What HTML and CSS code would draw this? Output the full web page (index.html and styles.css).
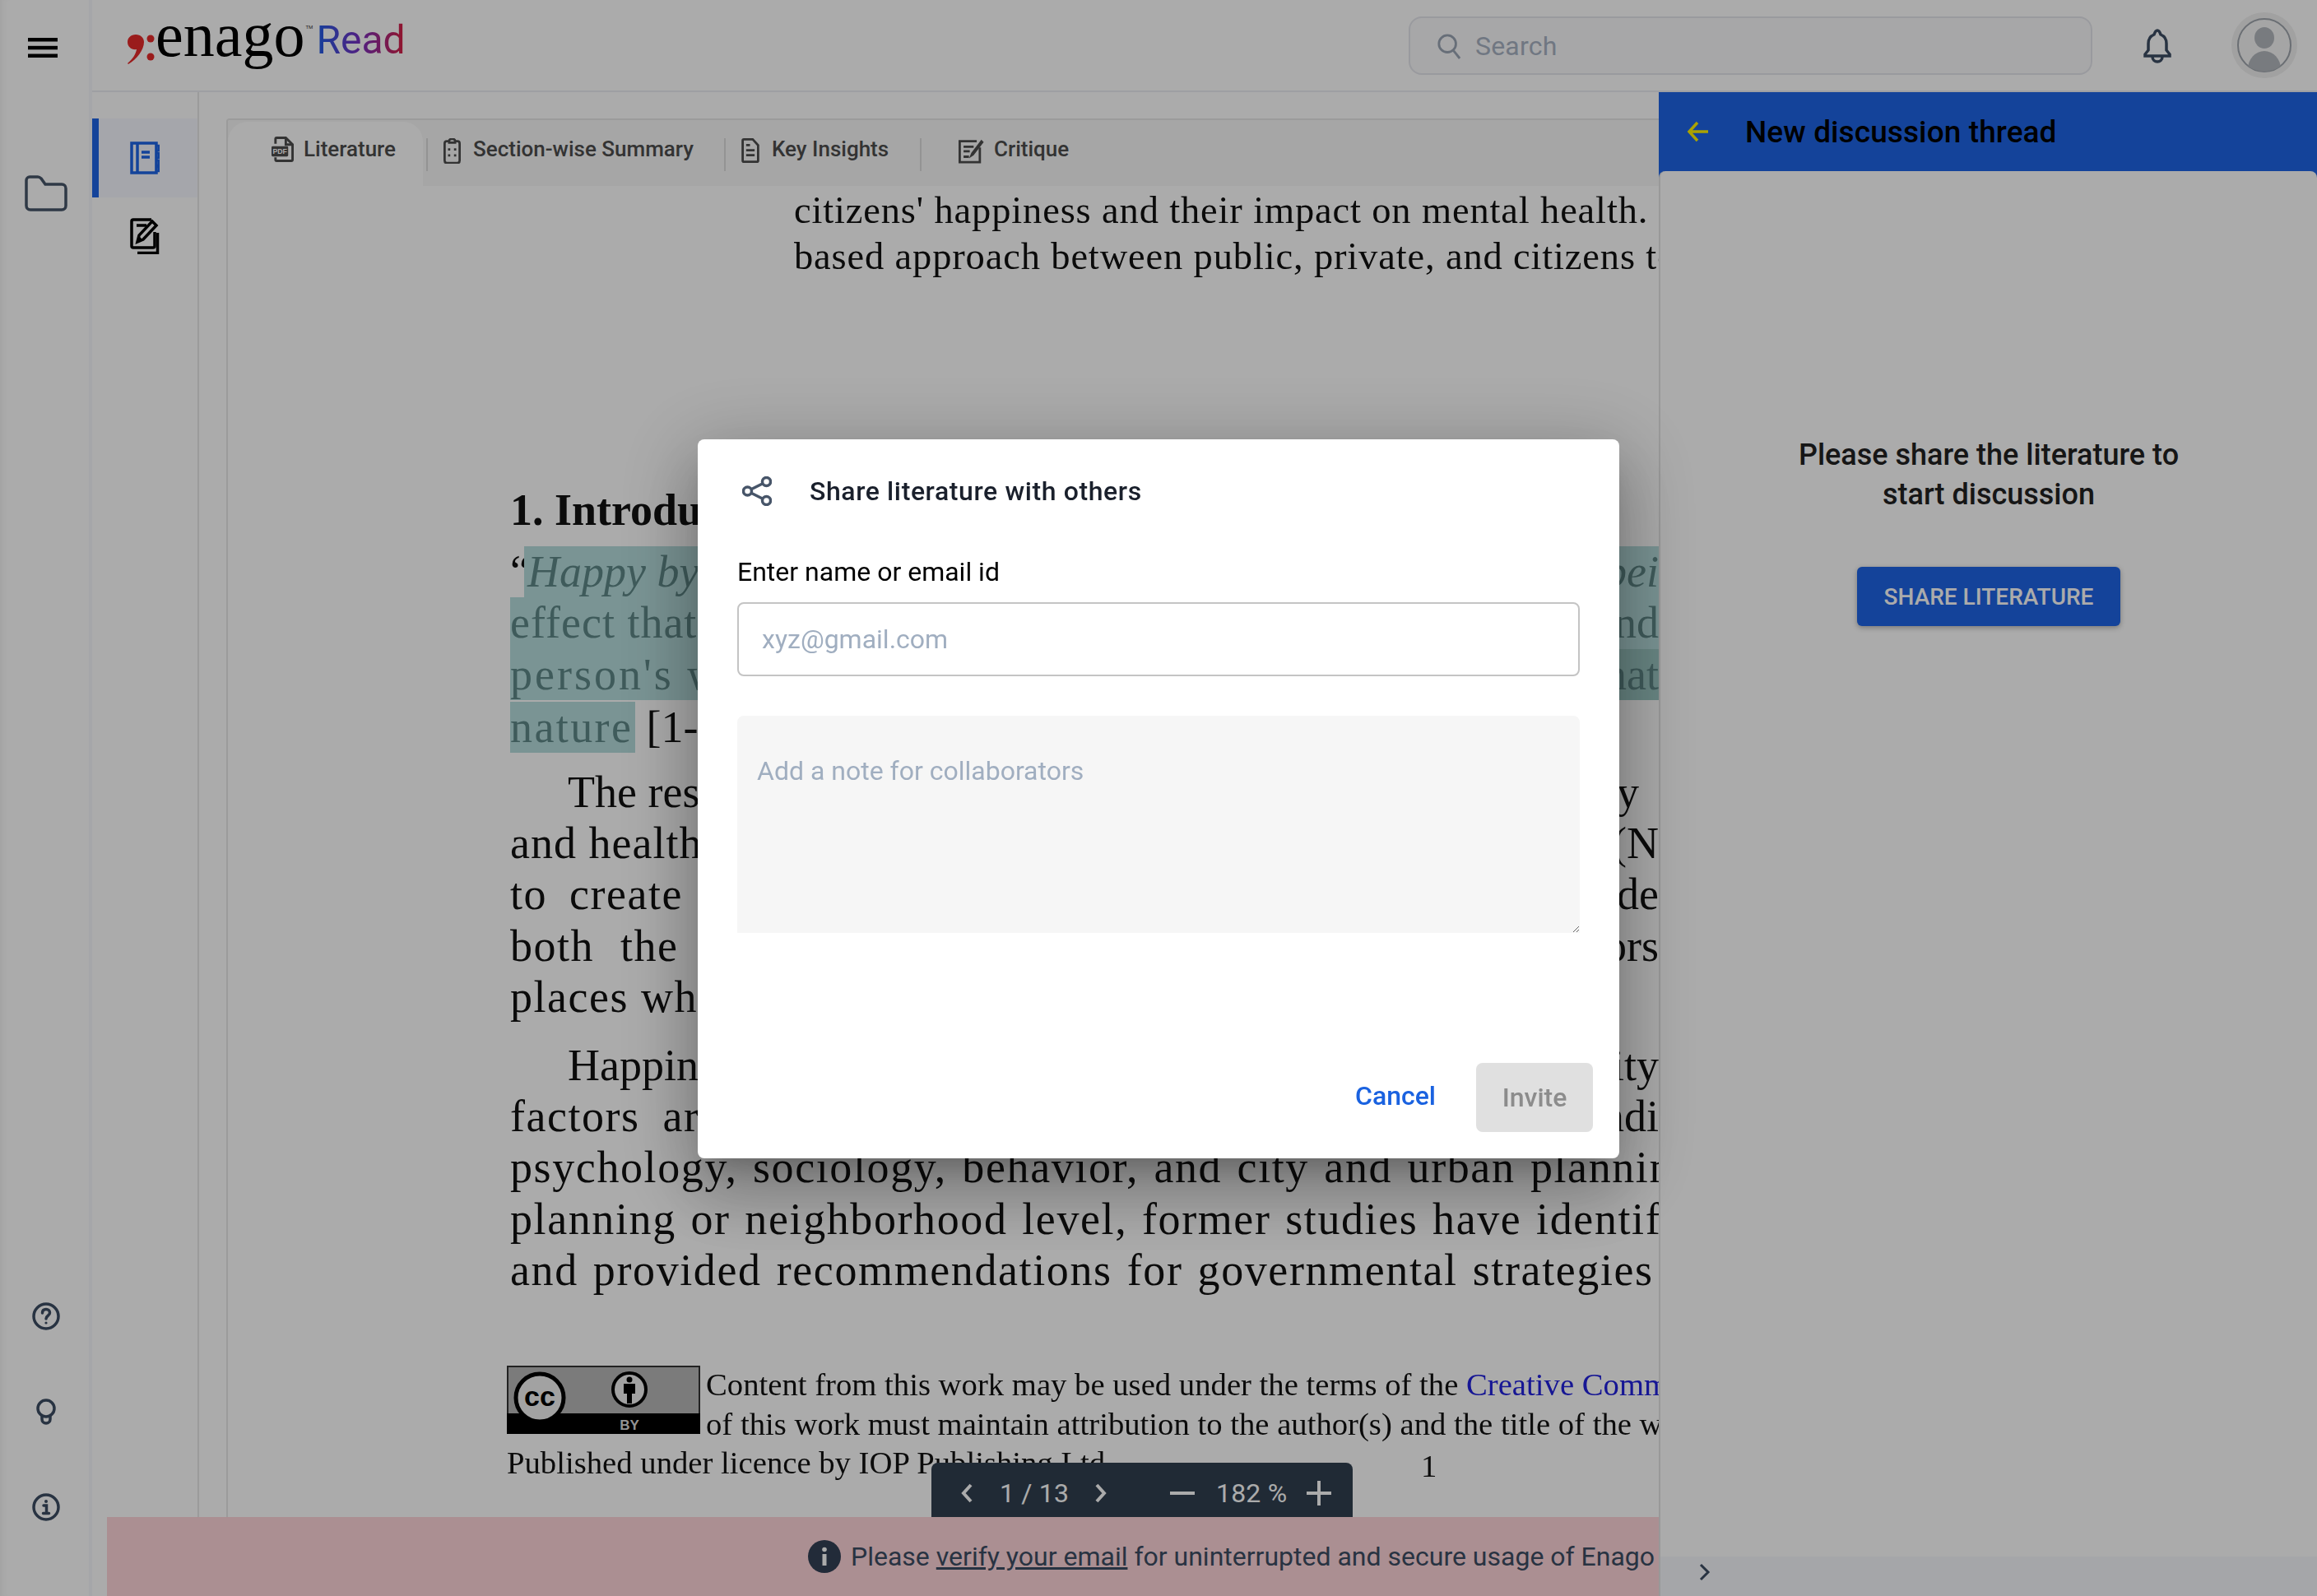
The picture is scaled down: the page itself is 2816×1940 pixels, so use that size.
FILE: index.html
```html
<!DOCTYPE html>
<html lang="en">
<head>
<meta charset="utf-8">
<title>Enago Read</title>
<link rel="stylesheet" href="styles.css">
</head>
<body>
<div class="app">
  <aside class="rail">
    <svg class="ic-menu" viewBox="0 0 36 24"><rect width="36" height="4.5"/><rect y="9.8" width="36" height="4.5"/><rect y="19.5" width="36" height="4.5"/></svg>
    <svg class="ic-folder" viewBox="0 0 52 44"><path d="M6 2h10c2 0 3 1 4 2l5 7h20c3 0 5 2 5 5v21c0 3-2 5-5 5H7c-3 0-5-2-5-5V6c0-2 2-4 4-4z"/></svg>
    <div class="rail-foot">
      <svg class="ic-foot" viewBox="0 0 34 34"><circle cx="17" cy="17" r="15"/><path d="M12.5 13c0-3 2-4.500 4.500-4.500s4.500 1.600 4.500 4.200c0 3.800-4.500 3.300-4.500 7.300"/><circle class="dot" cx="17" cy="25" r="1.600"/></svg>
      <svg class="ic-bulb" viewBox="0 0 26 32"><circle cx="13" cy="12" r="10"/><path d="M8 21v4c0 3 2 5 5 5s5-2 5-5v-4"/></svg>
      <svg class="ic-foot" viewBox="0 0 34 34"><circle cx="17" cy="17" r="15"/><circle class="dot" cx="17" cy="10" r="2"/><path d="M14 15h3.500v9M13.500 24.500h7"/></svg>
    </div>
  </aside>
  <div class="content">
    <header class="topbar">
      <div class="logo">
        <svg class="logo-mark" viewBox="0 0 34 36"><path class="mark" d="M10 0c6 0 10 4 10 9 0 10-9 21-19 27l-1-1c6-5 10-11 11-17-6 1-11-3-11-9C0 4 4 0 10 0z"/><circle class="mark" cx="28" cy="5" r="4.500"/><circle class="mark" cx="28" cy="27" r="4.500"/></svg>
        <span class="logo-word">enago</span><span class="logo-tm">TM</span><span class="logo-read">Read</span>
      </div>
      <div class="search">
        <svg class="ic-search" viewBox="0 0 32 34"><circle cx="14" cy="14" r="11"/><path d="M22 23l8 10"/></svg>
        <span>Search</span>
      </div>
      <svg class="ic-bell" viewBox="0 0 34 42"><path d="M17 2c2 0 3 2 4 5 5 2 7 6 7 11v8l4 5v2H2v-2l4-5v-8c0-5 2-9 7-11 1-3 2-5 4-5z"/><path d="M11 34c0 4 3 6 6 6s6-2 6-6"/></svg>
      <div class="avatar">
        <svg viewBox="0 0 66 66"><defs><clipPath id="av"><circle cx="33" cy="33" r="32"/></clipPath></defs><circle class="av-ring" cx="33" cy="33" r="32"/><g clip-path="url(#av)"><ellipse class="av-p" cx="33" cy="24" rx="12" ry="13"/><ellipse class="av-p" cx="33" cy="62" rx="20" ry="22"/></g></svg>
      </div>
    </header>
    <div class="work">
      <nav class="sidenav">
        <div class="snav-item active">
          <svg class="ic-note" viewBox="0 0 36 40"><path d="M2 2h30v36H2zM9 2v36"/><path d="M14 13h10M14 19h10"/><path class="rings" d="M32 5h3v6h-3zM32 14h3v6h-3zM32 23h3v6h-3zM32 31h3v5h-3z"/></svg>
        </div>
        <div class="snav-item">
          <svg class="ic-edit" viewBox="0 0 36 44"><path d="M26 2H4C2.500 2 2 2.500 2 4v30c0 1.500.5 2 2 2h24c1.500 0 2-.5 2-2V17"/><path d="M8 9h12"/><path d="M33.500 18v24.500H9"/><path d="M9 29l2-8L27 4l5 5-16 17z"/><path d="M9 29l6-3-4-4z" class="fill"/></svg>
        </div>
      </nav>
      <main class="main">
        <div class="viewer">
          <div class="tabs">
            <div class="tab tab-active">
              <svg class="ic-tab ic-pdf" viewBox="0 0 28 32"><path d="M5 9V3c0-1 .5-1.500 1.500-1.500H18L26.500 10v19c0 1-.5 1.500-1.500 1.500H6.500C5.500 30.500 5 30 5 29v-3"/><path d="M18 2v8h8"/><rect class="fill" x="0" y="12" width="21" height="13" rx="1.500"/><text x="10.500" y="22" class="pdf-t">PDF</text></svg>
              <span class="t-lit">Literature</span>
            </div>
            <div class="tab">
              <svg class="ic-tab ic-clip" viewBox="0 0 24 34"><path d="M8 4H5C3 4 2 5 2 7v23c0 2 1 3 3 3h14c2 0 3-1 3-3V7c0-2-1-3-3-3h-3"/><path d="M8 6V4c0-2 2-3 4-3s4 1 4 3v2z"/><path class="thin" d="M6.500 15h3M14.500 15h3M6.500 23h3M14.500 23h3"/></svg>
              <span class="t-sec">Section-wise Summary</span>
            </div>
            <div class="tab">
              <svg class="ic-tab ic-doc" viewBox="0 0 24 32"><path d="M2 3c0-1 .5-1.500 1.500-1.500H15L22 9v20c0 1-.5 1.500-1.500 1.500h-17C2.500 30.500 2 30 2 29z"/><path class="thin" d="M6.500 9h5M6.500 15.500h11M6.500 22h11"/></svg>
              <span class="t-key">Key Insights</span>
            </div>
            <div class="tab">
              <svg class="ic-tab ic-crit" viewBox="0 0 34 34"><path d="M28 13v19H2V5h22"/><path class="thin" d="M7 12h13M7 18h8M7 25h7"/><path class="fill" d="M14 27l3-7L30 3l3 3-13 17z"/></svg>
              <span class="t-cri">Critique</span>
            </div>
          </div>
          <div class="doc">
            <div class="page">
              <div class="abstract">
                <div class="a-line">citizens' happiness and their impact on mental health.</div>
                <div class="a-line">based approach between public, private, and citizens to improve</div>
              </div>
              <h1 class="doc-h">1. Introduction</h1>
              <div class="para para-first">
                <div class="ln"><span class="quote">“</span><span class="hl-row"><em>Happy by Design</em><em>bei</em></span></div>
                <div class="ln ln-hl"><span class="sp1">effect that the</span><span>nd</span></div>
                <div class="ln ln-hl"><span class="sp3">person's well</span><span class="deep">nat</span></div>
                <div class="ln ln-last"><span><span class="hl-word">nature</span> [1-3].</span></div>
              </div>
              <div class="para para-second">
                <div class="ln"><span class="indent">The research</span><span class="end-y">y</span></div>
                <div class="ln"><span class="sp1">and health</span><span>(N</span></div>
                <div class="ln"><span class="wide">to create</span><span>de</span></div>
                <div class="ln"><span class="ws-both">both the</span><span>ors</span></div>
                <div class="ln"><span class="sp2">places where</span></div>
              </div>
              <div class="para para-third">
                <div class="ln"><span class="indent">Happiness</span><span>ity</span></div>
                <div class="ln"><span class="ws-fact">factors are</span><span>adi</span></div>
                <div class="ln ln-full f1">psychology, sociology, behavior, and city and urban planning</div>
                <div class="ln ln-full f2">planning or neighborhood level, former studies have identified</div>
                <div class="ln ln-full f3">and provided recommendations for governmental strategies and</div>
              </div>
              <div class="foot">
                <svg class="cc" viewBox="0 0 235 83">
                  <rect class="cc-bg" x="1" y="1" width="233" height="81"/>
                  <rect x="0" y="58" width="235" height="25"/>
                  <circle class="cc-ring" cx="40" cy="39" r="29"/>
                  <text class="cc-t" x="40" y="49">cc</text>
                  <circle class="cc-ring2" cx="149" cy="29" r="20"/>
                  <circle cx="149" cy="17" r="3.500"/>
                  <path d="M142 22h14v12h-4v12h-6V34h-4z"/>
                  <text class="by-t" x="149" y="78">BY</text>
                </svg>
                <div class="foot-text">
                  <div class="ft-line">Content from this work may be used under the terms of the <a class="cc-link">Creative Commons Attribution</a></div>
                  <div class="ft-line">of this work must maintain attribution to the author(s) and the title of the work</div>
                </div>
              </div>
              <div class="pub"><span>Published under licence by IOP Publishing Ltd</span><span class="pageno">1</span></div>
            </div>
          </div>
        </div>
      </main>
      <section class="panel">
        <div class="panel-head">
          <svg class="ic-back" viewBox="0 0 28 28"><path d="M26 14H3M13 3L3 14l10 11"/></svg>
          <span>New discussion thread</span>
        </div>
        <div class="panel-body">
          <p class="panel-msg">Please share the literature to<br>start discussion</p>
          <button class="btn-share">SHARE LITERATURE</button>
          <div class="panel-foot">
            <svg class="ic-chev" viewBox="0 0 14 22"><path d="M2 2l9 9-9 9"/></svg>
          </div>
        </div>
      </section>
    </div>
  </div>
</div>

<div class="toolbar">
  <svg class="tb-chev" viewBox="0 0 14 24"><path d="M12 2L3 12l9 10"/></svg>
  <span class="tb-pages">1 / 13</span>
  <svg class="tb-chev tb-r" viewBox="0 0 14 24"><path d="M2 2l9 10-9 10"/></svg>
  <svg class="tb-sign tb-minus" viewBox="0 0 30 30"><path d="M0 15h30"/></svg>
  <span class="tb-zoom">182 %</span>
  <svg class="tb-sign" viewBox="0 0 30 30"><path d="M0 15h30M15 0v30"/></svg>
</div>

<div class="banner">
  <svg class="ic-ban" viewBox="0 0 40 40"><circle cx="20" cy="20" r="20"/><circle class="w" cx="20" cy="11.500" r="2.800"/><rect class="w" x="17.500" y="17" width="5" height="14"/></svg>
  <span>Please <u>verify your email</u> for uninterrupted and secure usage of Enago</span>
</div>

<div class="backdrop">
  <div class="modal">
    <div class="modal-head">
      <svg class="ic-share" viewBox="0 0 36 36"><circle cx="29.500" cy="6.500" r="5"/><circle cx="6.500" cy="18" r="5"/><circle cx="29.500" cy="29.500" r="5"/><path d="M11 15.700l14-7M11 20.300l14 7"/></svg>
      <span>Share literature with others</span>
    </div>
    <label class="modal-label" for="who">Enter name or email id</label>
    <input id="who" class="modal-input" placeholder="xyz@gmail.com">
    <textarea class="modal-note" placeholder="Add a note for collaborators"></textarea>
    <div class="modal-foot">
      <button class="btn-cancel">Cancel</button>
      <button class="btn-invite">Invite</button>
    </div>
  </div>
</div>
</body>
</html>
```

FILE: styles.css
```css
* { box-sizing: border-box; }
html, body { margin: 0; padding: 0; width: 2816px; height: 1940px; overflow: hidden; background: #fff; font-family: Roboto, "Liberation Sans", sans-serif; }
svg { display: block; flex: none; }
.app { display: flex; width: 2816px; height: 1940px; }

/* left rail */
.rail { width: 112px; height: 100%; border-right: 4px solid #f6f8fc; display: flex; flex-direction: column; align-items: center; padding: 46px 4px 0 0; box-shadow: inset 8px 0 8px -6px #f0f0f0; }
.ic-menu { width: 36px; height: 24px; fill: #000; }
.ic-folder { width: 52px; height: 44px; margin: 143px 0 0 7px; fill: none; stroke: #475569; stroke-width: 3.500; }
.rail-foot { margin-top: auto; height: 357px; width: 100%; padding-left: 8px; display: flex; flex-direction: column; align-items: center; }
.ic-foot { width: 34px; height: 34px; fill: none; stroke: #3d4d63; stroke-width: 3.500; stroke-linecap: round; }
.ic-foot .dot { fill: #3d4d63; stroke: none; }
.ic-bulb { width: 26px; height: 32px; fill: none; stroke: #3d4d63; stroke-width: 3.500; margin: 83px 0 83px; }

.content { flex: 1; min-width: 0; display: flex; flex-direction: column; }

/* top bar */
.topbar { height: 112px; flex: none; border-bottom: 2px solid #ecedf3; display: flex; align-items: center; padding-left: 43px; }
.logo { display: flex; align-items: flex-start; height: 112px; }
.logo-mark { width: 34px; height: 36px; margin-top: 43px; }
.mark { fill: #e62a2a; }
.logo-word { font-family: "Liberation Serif", serif; font-size: 76px; line-height: 86px; color: #000; }
.logo-tm { font-size: 6px; line-height: 8px; margin-top: 30px; margin-left: 1px; color: #333; width: 13px; }
.logo-read { font-size: 48px; line-height: 56px; margin-top: 22px; background: linear-gradient(90deg, #1f5fe8, #7a2fc0 50%, #dc1f3e); -webkit-background-clip: text; background-clip: text; color: transparent; }
.search { margin-left: auto; width: 831px; height: 71px; margin-top: 1px; border: 2px solid #e5e6ec; border-radius: 16px; background: #f9f9fb; display: flex; align-items: center; gap: 17px; padding-left: 32px; font-size: 32px; color: #a8b2c2; letter-spacing: .2px; }
.ic-search { width: 30px; height: 32px; fill: none; stroke: #9aa5b4; stroke-width: 3; }
.ic-bell { width: 34px; height: 42px; margin-left: 62px; margin-top: 1px; fill: none; stroke: #3d4d63; stroke-width: 3.500; }
.avatar { width: 80px; height: 80px; margin-left: 73px; margin-right: 24px; border-radius: 50%; background: #f0f0f0; display: flex; align-items: center; justify-content: center; }
.avatar svg { width: 66px; height: 66px; }
.av-ring { fill: #f7f7f7; stroke: #9ea4ac; stroke-width: 2; }
.av-p { fill: #b4b8be; }

.work { flex: 1; min-height: 0; display: flex; }

/* second nav */
.sidenav { width: 130px; flex: none; border-right: 2px solid #e7e7e7; padding-top: 32px; }
.snav-item { height: 96px; display: flex; align-items: center; justify-content: center; }
.snav-item.active { background: #f6f8ff; border-left: 8px solid #1e65e6; padding-right: 8px; }
.ic-note { width: 36px; height: 40px; fill: none; stroke: #1e65e6; stroke-width: 3.500; }
.ic-note .rings { stroke-width: 2.500; }
.ic-edit { width: 36px; height: 44px; margin-top: -2px; fill: none; stroke: #000; stroke-width: 3.500; }
.ic-edit .fill { fill: #000; stroke: none; }

/* viewer */
.main { flex: 1; min-width: 0; padding: 32px 0 0 33px; }
.viewer { height: 100%; border-left: 2px solid #e7e7e7; border-top: 2px solid #e7e7e7; border-top-left-radius: 4px; display: flex; flex-direction: column; overflow: hidden; }
.tabs { height: 80px; flex: none; background: #f8f8f8; display: flex; color: #4d4d4d; font-size: 26px; font-weight: 500; }
.tab { display: flex; align-items: center; height: 76px; position: relative; }
.tab-active { background: #fff; width: 237px; height: 78px; margin-top: 2px; border-radius: 24px 24px 0 0; padding: 0 0 12px 53px; gap: 12px; }
.tab:nth-child(2) { width: 366px; padding: 0 0 6px 25px; gap: 14px; margin-left: -1px; }
.tab:nth-child(3) { width: 238px; padding: 0 0 6px 21px; gap: 14px; }
.tab:nth-child(4) { padding: 0 0 7px 47px; gap: 11px; }
.tab:nth-child(n+2)::before { content: ""; position: absolute; left: 1px; top: 22px; width: 2px; height: 40px; background: #dcdcdc; }
.tab:nth-child(2)::before { left: 5px; }
.ic-tab { fill: none; stroke: #4d4d4d; stroke-width: 3; }
.ic-tab .thin { stroke-width: 3; }
.ic-tab .fill { fill: #4d4d4d; stroke: none; }
.ic-pdf { width: 27px; height: 31px; }
.pdf-t { font-family: "Liberation Sans", sans-serif; font-size: 9px; font-weight: 700; fill: #fff; stroke: none; text-anchor: middle; }
.ic-clip { width: 23px; height: 31px; margin-top: 4px; }
.ic-doc { width: 24px; height: 30px; margin-top: 4px; }
.ic-crit { width: 33px; height: 32px; margin-top: 4px; }

.doc { flex: 1; min-height: 0; overflow: hidden; position: relative; }
.page { width: 1739px; padding-left: 343px; font-family: "Liberation Serif", serif; color: #111; filter: blur(.5px); }
.abstract { padding: 2px 0 0 345px; font-size: 46.500px; line-height: 56px; white-space: nowrap; letter-spacing: .85px; }
.doc-h { margin: 223px 0 0; padding-top: 26px; height: 89px; font-size: 54px; line-height: 62px; font-weight: 700; white-space: nowrap; }
.para { font-size: 54px; line-height: 62.300px; }
.para-first { margin-top: 12px; }
.para-second { margin-top: 18.500px; }
.para-third { margin-top: 20.500px; }
.ln { width: 1396px; height: 62.300px; display: flex; justify-content: space-between; white-space: nowrap; }
.ln-hl { background: #b6dddd; color: #5f8888; }
.ln-last { padding-top: 2px; }
.ln-full { display: block; }
.quote { width: 17px; flex: none; }
.hl-row { flex: 1; display: flex; justify-content: space-between; background: #b6dddd; color: #5f8888; padding-left: 4px; }
.deep { background: #9cc8c4; padding-left: 48px; }
.hl-word { display: inline-block; width: 152px; height: 62px; background: #b6dddd; color: #5f8888; letter-spacing: 2.400px; }
.indent { padding-left: 70px; }
.end-y { padding-right: 24px; }
.sp1 { letter-spacing: 1px; }
.sp2 { letter-spacing: 1.500px; }
.sp3 { letter-spacing: 3px; }
.wide { word-spacing: 12px; letter-spacing: 1.500px; }
.ws-both { word-spacing: 17px; letter-spacing: 1.500px; }
.ws-fact { word-spacing: 13px; letter-spacing: 1.500px; }
.f1 { letter-spacing: 1.600px; word-spacing: 3.300px; }
.f2 { letter-spacing: 1.600px; word-spacing: 2.600px; }
.f3 { letter-spacing: 1.600px; word-spacing: 3px; }
.foot { display: flex; margin-top: 85px; font-size: 38.700px; line-height: 47.500px; white-space: nowrap; margin-left: -4px; }
.cc { width: 235px; height: 83px; fill: #000; }
.cc-bg { fill: #b8b8b8; stroke: #333; stroke-width: 2; }
.cc-ring { fill: #f2f2f2; stroke: #000; stroke-width: 5; }
.cc-ring2 { fill: #f2f2f2; stroke: #000; stroke-width: 4; }
.cc-t { font-family: "Liberation Sans", sans-serif; font-weight: 700; font-size: 34px; text-anchor: middle; fill: #000; }
.by-t { font-family: "Liberation Sans", sans-serif; font-weight: 700; font-size: 17px; text-anchor: middle; fill: #dcdcdc; }
.foot-text { margin-left: 7px; }
.cc-link { color: #2222dd; }
.pub { display: flex; font-size: 38.700px; line-height: 48px; white-space: nowrap; margin: -1px 0 0 -4px; }
.pageno { margin-left: 384px; padding-top: 4px; }

/* right panel */
.panel { width: 800px; flex: none; background: #1e65e6; display: flex; flex-direction: column; }
.panel-head { height: 96px; flex: none; display: flex; align-items: center; font-size: 37px; font-weight: 500; color: #000; letter-spacing: .1px; padding-left: 34px; gap: 43px; }
.ic-back { width: 28px; height: 28px; fill: none; stroke: #fff200; stroke-width: 3.500; }
.panel-body { flex: 1; min-height: 0; background: #fff; border-left: 2px solid #e5e5e5; border-radius: 8px 8px 0 0; display: flex; flex-direction: column; align-items: center; padding-top: 321px; }
.panel-msg { margin: 0; font-size: 36px; line-height: 48px; font-weight: 500; color: #222; text-align: center; }
.btn-share { margin-top: 64px; width: 320px; height: 72px; border: 0; border-radius: 6px; background: #1e65e6; color: #fff; font: 500 28px Roboto, sans-serif; box-shadow: 0 2px 6px rgba(0,0,0,.3); }
.panel-foot { margin-top: auto; height: 48px; width: 100%; background: #f7f8fc; padding: 8px 0 0 47px; }
.ic-chev { width: 14px; height: 22px; fill: none; stroke: #3d4d63; stroke-width: 3; }

/* floating bars */
.toolbar { position: absolute; left: 1132px; top: 1778px; width: 512px; height: 66px; background: #313f50; border-radius: 8px 8px 0 0; display: flex; align-items: center; padding: 8px 0 0 36px; color: #fff; font-size: 32px; z-index: 2; }
.toolbar svg { fill: none; stroke: #fff; stroke-width: 4; }
.tb-chev { width: 14px; height: 24px; }
.tb-pages { margin-left: 33px; width: 82px; white-space: nowrap; letter-spacing: .2px; }
.tb-r { margin-left: 34px; }
.tb-sign { width: 30px; height: 30px; }
.tb-minus { margin-left: 77px; margin-right: 26px; }
.tb-zoom { width: 86px; margin-right: 24px; white-space: nowrap; letter-spacing: .2px; }

.banner { position: absolute; left: 130px; top: 1844px; width: 1886px; height: 96px; background: #ffd5da; display: flex; align-items: center; padding-left: 852px; gap: 12px; font-size: 32px; color: #3d4d63; letter-spacing: 0; white-space: nowrap; z-index: 1; overflow: hidden; }
.ic-ban { width: 40px; height: 40px; fill: #334155; }
.ic-ban .w { fill: #fff; }

/* dialog */
.backdrop { position: fixed; inset: 0; background: rgba(0,0,0,.33); display: flex; align-items: center; justify-content: center; z-index: 5; }
.modal { width: 1120px; height: 874px; margin-top: 2px; background: #fff; border-radius: 8px; box-shadow: 0 22px 30px -14px rgba(0,0,0,.2), 0 48px 76px 6px rgba(0,0,0,.14), 0 18px 92px 16px rgba(0,0,0,.2); display: flex; flex-direction: column; }
.modal-head { height: 126px; flex: none; display: flex; align-items: center; padding-left: 54px; gap: 46px; font-size: 32px; font-weight: 500; color: #1a202c; letter-spacing: .6px; }
.ic-share { width: 36px; height: 36px; fill: none; stroke: #475569; stroke-width: 3.500; }
.modal-label { margin-left: 48px; height: 38px; line-height: 38px; font-size: 32px; color: #000; margin-top: 16px; margin-bottom: 18px; flex: none; }
.modal-input { margin-left: 48px; width: 1024px; height: 90px; flex: none; border: 2px solid #c4c4c4; border-radius: 8px; padding: 0 28px; font: 32px Roboto, sans-serif; background: #fff; outline: 0; }
.modal-input::placeholder, .modal-note::placeholder { color: #a0aec0; opacity: 1; }
.modal-note { margin: 48px 0 0 48px; width: 1024px; height: 264px; flex: none; border: 0; border-radius: 8px 8px 0 0; background: #f6f6f6; padding: 48px 24px 0; font: 32px Roboto, sans-serif; outline: 0; }
.modal-foot { margin-top: auto; display: flex; justify-content: flex-end; align-items: center; gap: 49px; padding: 0 32px 32px 0; }
.btn-cancel { border: 0; background: none; padding: 0; font: 500 32px Roboto, sans-serif; color: #1a62e0; margin-top: -4px; }
.btn-invite { width: 142px; height: 84px; border: 0; border-radius: 8px; background: #e0e0e0; color: #8c8c8c; font: 500 32px Roboto, sans-serif; }
```
